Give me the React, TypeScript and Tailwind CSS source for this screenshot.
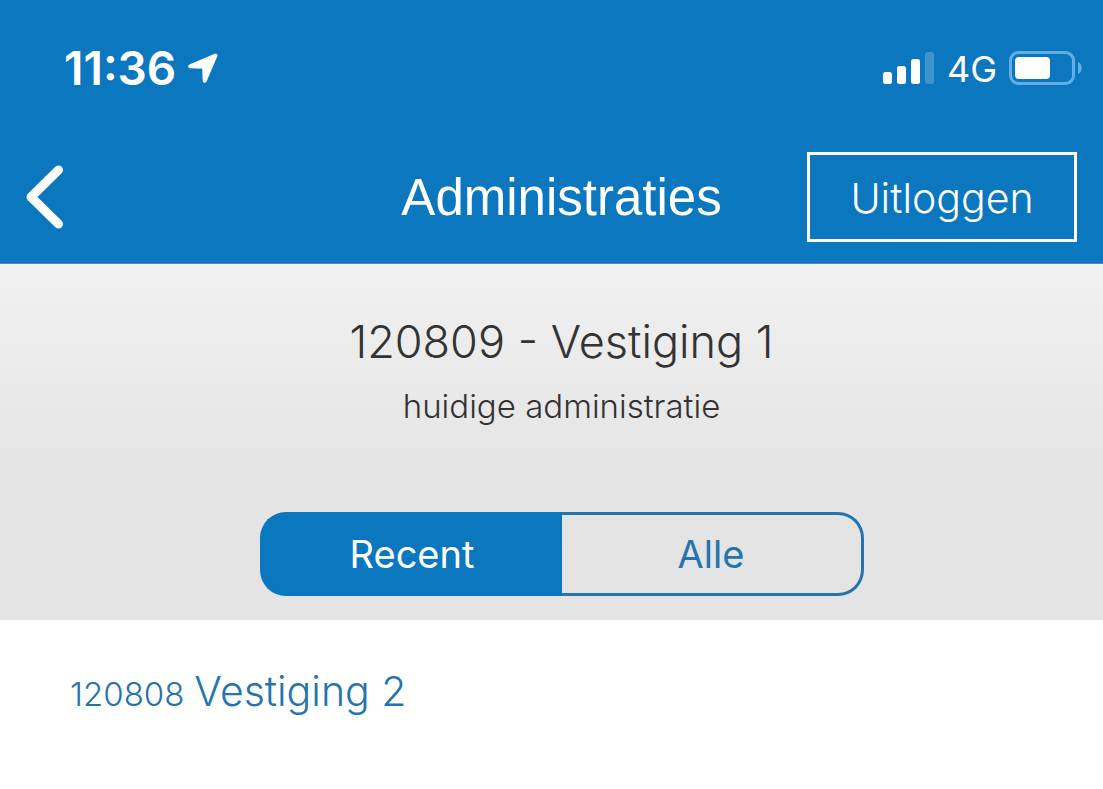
import { useState } from "react";

const tabs = ["Recent", "Alle"];

function StatusBar() {
  return (
    <div className="flex h-12 items-center justify-between pl-16 pr-5 text-white">
      <div className="flex items-center gap-3">
        <span className="text-[46px] leading-12 font-semibold">11:36</span>
        <svg viewBox="0 0 30 30" className="h-[30px] w-[30px]" fill="currentColor" stroke="currentColor" strokeWidth="4" strokeLinejoin="round" aria-hidden="true">
          <path d="M27.500 2.500 2.200 13.300 16.200 13.800 16.700 27.800Z" />
        </svg>
      </div>
      <div className="flex items-center gap-3">
        <svg viewBox="0 0 52 32" className="h-8 w-[52px]" fill="currentColor" aria-hidden="true">
          <rect x="0" y="20" width="9" height="12" rx="2.500" />
          <rect x="14" y="14" width="9" height="18" rx="2.500" />
          <rect x="28" y="7" width="9" height="25" rx="2.500" />
          <rect x="42" y="0" width="9" height="32" rx="2.500" opacity=".22" />
        </svg>
        <span className="pt-0.5 text-4xl leading-12">4G</span>
        <svg viewBox="0 0 74 34" className="h-[34px] w-[74px]" aria-hidden="true">
          <rect x="1.500" y="1.500" width="63" height="31" rx="8" fill="none" stroke="#64aee8" strokeWidth="3" />
          <rect x="6" y="6" width="35" height="22" rx="4" fill="#fff" />
          <path d="M69 11C74 13 74 21 69 23Z" fill="#64aee8" />
        </svg>
      </div>
    </div>
  );
}

export default function App() {
  const [active, setActive] = useState("Recent");

  return (
    <div className="min-h-screen bg-white font-['Inter',sans-serif]">
      <header className="border-b border-[#5b83b5] bg-[#0a77bf] pt-11">
        <StatusBar />
        <nav className="grid grid-cols-[1fr_auto_1fr] items-center pt-[60px] pr-[26px] pb-[21px] pl-[46px] text-white">
          <button type="button" aria-label="Terug" className="-ml-5 w-10">
            <svg viewBox="0 0 40 64" className="h-16 w-10" fill="none" stroke="currentColor" strokeWidth="9" strokeLinecap="round" strokeLinejoin="round" aria-hidden="true">
              <path d="M32.500 5 5 32 32.500 59" />
            </svg>
          </button>
          <h1 className="pt-0.5 font-['Liberation_Sans',sans-serif] text-[51px] leading-[60px]">Administraties</h1>
          <button type="button" className="h-[90px] w-[270px] justify-self-end border-3 border-white pt-1 text-[41px] font-light">
            Uitloggen
          </button>
        </nav>
      </header>

      <section className="bg-linear-to-b from-[#f1f1f2] to-[#e4e4e4] to-60% pt-12 pb-6 pl-5 text-center text-[#333]">
        <h2 className="text-[45px] leading-[60px] font-light">120809 - Vestiging 1</h2>
        <p className="pt-2.5 text-[33px] leading-12 font-light">huidige administratie</p>
        <div className="mx-auto mt-[82px] flex h-[84px] w-[604px]">
          {tabs.map((tab) => (
            <button
              key={tab}
              type="button"
              aria-pressed={active === tab}
              onClick={() => setActive(tab)}
              className={
                active === tab
                  ? "flex-1 border-3 border-[#0a77bf] bg-[#0a77bf] text-[38px] text-white first:rounded-l-[26px] first:border-r-0 last:rounded-r-[26px] last:border-l-0"
                  : "flex-1 border-3 border-[#2474b0] text-[38px] text-[#2474b0] first:rounded-l-[26px] first:border-r-0 last:rounded-r-[26px] last:border-l-0"
              }
            >
              {tab}
            </button>
          ))}
        </div>
      </section>

      <ul className="px-[70px] py-10 text-[#2474b0]">
        <li>
          <a href="#120808" className="flex items-baseline gap-2.5 font-light">
            <span className="text-[33px]">120808</span>
            <span className="text-[41px] leading-[62px]">Vestiging 2</span>
          </a>
        </li>
      </ul>
    </div>
  );
}
